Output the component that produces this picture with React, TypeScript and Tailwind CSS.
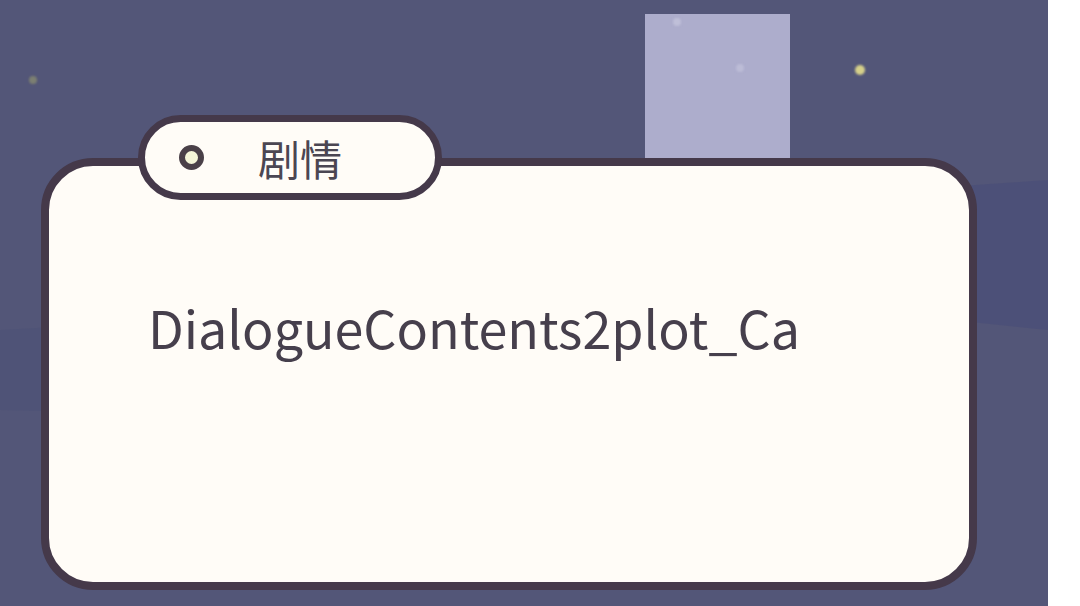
import React from "react";

// small glowing dots in the night sky
const stars = [
  { left: "left-[29px]", top: "top-[76px]", size: "w-[8px] h-[8px]", color: "bg-[#8f916f]/70" },
  { left: "left-[855px]", top: "top-[65px]", size: "w-[10px] h-[10px]", color: "bg-[#d6d08a]" },
  { left: "left-[673px]", top: "top-[18px]", size: "w-[8px] h-[8px]", color: "bg-[#bfbfd8]" },
  { left: "left-[736px]", top: "top-[64px]", size: "w-[8px] h-[8px]", color: "bg-[#bcbcd6]" },
];

function SkyWaves() {
  return (
    <svg className="absolute inset-0" width="1048" height="606" viewBox="0 0 1048 606">
      <path d="M0 330 C 200 320, 400 300, 560 290 L 560 420 C 400 410, 200 415, 0 410 Z" fill="#4d5176" opacity="0.6" />
      <path d="M620 230 C 780 200, 900 190, 1048 180 L 1048 330 C 900 315, 780 300, 620 300 Z" fill="#4a4e78" opacity="0.7" />
    </svg>
  );
}

export default function App() {
  return (
    <div className="flex w-[1080px] h-[606px] font-['Noto_Sans_CJK_SC','Noto_Sans',sans-serif]">
      <div className="relative w-[1048px] h-full bg-[#535678] overflow-hidden">
        <SkyWaves />

        {/* lavender block behind the card */}
        <div className="absolute left-[645px] top-[14px] w-[145px] h-[150px] bg-[#adadcc]" />

        {stars.map((s, i) => (
          <div key={i} className={`absolute rounded-full blur-[1px] ${s.left} ${s.top} ${s.size} ${s.color}`} />
        ))}

        <div className="relative pl-[41px] pt-[158px]">
          {/* Dialogue card */}
          <div className="w-[936px] h-[432px] border-[8px] border-[#45394a] rounded-[52px] bg-[#fffcf7] pl-[99px] pt-[130px]">
            <p className="text-[52px] leading-[1.2] text-[#463f4c]">DialogueContents2plot_Ca</p>
          </div>

          {/* Tab label */}
          <div className="absolute left-[138px] top-[115px] w-[304px] h-[85px] border-[7px] border-[#45394a] rounded-full bg-[#fffcf7] flex items-center pl-[34px]">
            <div className="w-[25px] h-[25px] rounded-full border-[6px] border-[#4a4048] bg-[#f4f5d8]" />
            <span className="ml-[54px] text-[42px] leading-none text-[#4b4652]">剧情</span>
          </div>
        </div>
      </div>
      <div className="flex-1 bg-white" />
    </div>
  );
}
